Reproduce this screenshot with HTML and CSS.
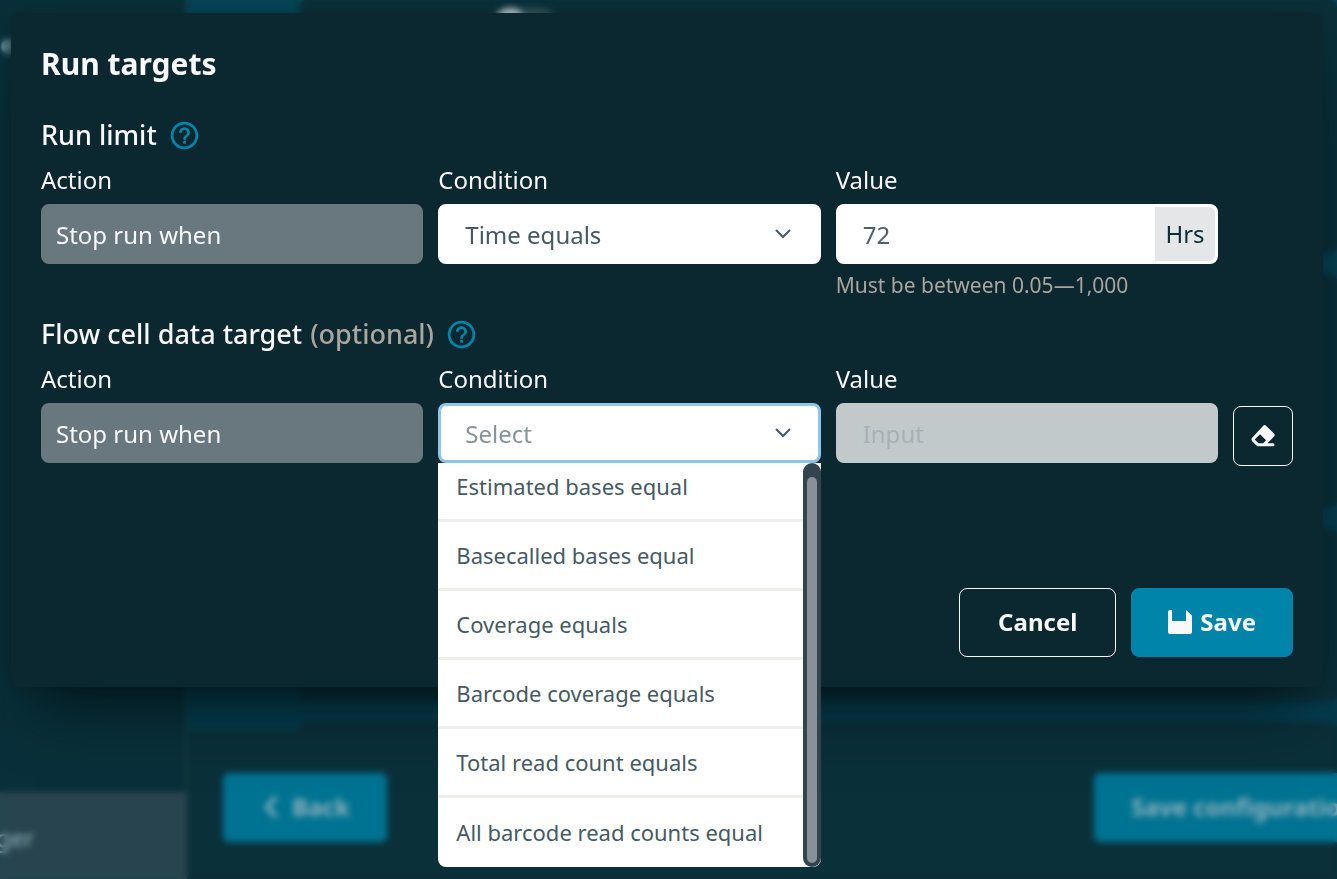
FILE: index.html
```html
<!DOCTYPE html>
<html lang="en">
<head>
    <meta charset="UTF-8">
    <meta name="viewport" content="width=device-width, initial-scale=1.0">
    <title>Run targets</title>
    <link rel="stylesheet" href="styles.css">
</head>
<body>
    <div class="app" inert>
        <div class="sidebar">
            <span class="sidebar-title">ile</span>
            <div class="sidebar-item">ger</div>
        </div>
        <div class="main">
            <div class="panels">
                <div class="panel panel-first"><span class="toggle"></span></div>
                <div class="panel"></div>
                <div class="panel"></div>
                <div class="panel panel-last"></div>
            </div>
            <div class="app-footer">
                <button class="app-button">
                    <svg width="20" height="24" viewBox="0 0 20 24" fill="none" stroke="currentColor" stroke-width="4"><path d="M16 2 7 12l9 10"/></svg>
                    Back
                </button>
                <button class="app-button">Save configuration</button>
            </div>
        </div>
    </div>

    <div class="overlay">
        <form class="modal" role="dialog" aria-labelledby="modalTitle">
            <h1 id="modalTitle">Run targets</h1>

            <h2>Run limit
                <svg class="help" viewBox="0 0 24 24"><path d="M11 18h2v-2h-2v2zm1-16C6.480 2 2 6.480 2 12s4.480 10 10 10 10-4.480 10-10S17.520 2 12 2zm0 18c-4.410 0-8-3.590-8-8s3.590-8 8-8 8 3.590 8 8-3.590 8-8 8zm0-14c-2.210 0-4 1.790-4 4h2c0-1.100.9-2 2-2s2 .9 2 2c0 2-3 1.750-3 5h2c0-2.250 3-2.500 3-5 0-2.210-1.790-4-4-4z"/></svg>
            </h2>
            <div class="row">
                <div class="field">
                    <label for="limitAction">Action</label>
                    <input class="box action" id="limitAction" type="text" value="Stop run when" readonly>
                </div>
                <div class="field">
                    <label for="limitCondition">Condition</label>
                    <div class="select-wrap">
                        <select class="box" id="limitCondition">
                            <option>Time equals</option>
                        </select>
                        <svg class="chevron" viewBox="0 0 16 10"><path d="M1 1l7 7 7-7"/></svg>
                    </div>
                </div>
                <div class="field">
                    <label for="limitValue">Value</label>
                    <div class="box value-box">
                        <input id="limitValue" type="text" value="72">
                        <span class="unit">Hrs</span>
                    </div>
                    <p class="hint">Must be between 0.05—1,000</p>
                </div>
            </div>

            <h2>Flow cell data target <span class="optional">(optional)</span>
                <svg class="help" viewBox="0 0 24 24"><path d="M11 18h2v-2h-2v2zm1-16C6.480 2 2 6.480 2 12s4.480 10 10 10 10-4.480 10-10S17.520 2 12 2zm0 18c-4.410 0-8-3.590-8-8s3.590-8 8-8 8 3.590 8 8-3.590 8-8 8zm0-14c-2.210 0-4 1.790-4 4h2c0-1.100.9-2 2-2s2 .9 2 2c0 2-3 1.750-3 5h2c0-2.250 3-2.500 3-5 0-2.210-1.790-4-4-4z"/></svg>
            </h2>
            <div class="row">
                <div class="field">
                    <label for="targetAction">Action</label>
                    <input class="box action" id="targetAction" type="text" value="Stop run when" readonly>
                </div>
                <div class="field">
                    <label for="targetCondition">Condition</label>
                    <div class="select-wrap">
                        <select class="box open" id="targetCondition">
                            <option>Select</option>
                        </select>
                        <svg class="chevron" viewBox="0 0 16 10"><path d="M1 1l7 7 7-7"/></svg>
                        <div class="dropdown">
                            <ul class="options" role="listbox" aria-label="Condition">
                                <li role="option">Estimated bases equal</li>
                                <li role="option">Basecalled bases equal</li>
                                <li role="option">Coverage equals</li>
                                <li role="option">Barcode coverage equals</li>
                                <li role="option">Total read count equals</li>
                                <li role="option">All barcode read counts equal</li>
                            </ul>
                            <div class="scrollbar"><div class="thumb"></div></div>
                        </div>
                    </div>
                </div>
                <div class="field">
                    <label for="targetValue">Value</label>
                    <input class="box" id="targetValue" type="text" placeholder="Input" disabled>
                </div>
                <button class="clear" type="button" aria-label="Clear">
                    <svg width="24" height="22" viewBox="0 0 24 22"><path fill="currentColor" fill-rule="evenodd" d="M12.200.7a2 2 0 0 1 2.800 0l8 7.800a2 2 0 0 1 0 2.900L16.500 18.300H22a1.500 1.500 0 0 1 0 3H7.500a3 3 0 0 1-2.100-.9L1.200 16.200a2.600 2.600 0 0 1 0-3.400zM9 9.200l-5.300 5.300 3.800 3.800h4.600l3-3z"/></svg>
                </button>
            </div>

            <div class="actions">
                <button class="cancel" type="button">Cancel</button>
                <button class="save" type="submit">
                    <svg width="24" height="24" viewBox="0 0 24 24"><path fill="currentColor" d="M2 0h2v11h14V0l6 5.500V22a2 2 0 0 1-2 2H2a2 2 0 0 1-2-2V2a2 2 0 0 1 2-2z"/></svg>
                    Save
                </button>
            </div>
        </form>
    </div>
</body>
</html>
```

FILE: styles.css
```css
* {box-sizing: border-box;}
body {margin: 0; font-family: 'Noto Sans', sans-serif; font-size: 24px; background-color: #0a303a; color: #f9f9fb;}
button, input, select {font-family: inherit; font-size: 24px; margin: 0;}
h1, h2, p, ul {margin: 0; padding: 0;}

/* app behind the dialog */
.app {display: flex; height: 100vh; overflow: hidden; color: #8db0bb;}
.sidebar {width: 187px; display: flex; flex-direction: column; justify-content: space-between; flex-shrink: 0; border-right: 2px solid #173c45; background-color: #09303a;}
.sidebar-title {height: 84px; line-height: 88px; margin-left: -13px; font-weight: 600;}
.sidebar-item {height: 87px; line-height: 92px; background-color: #27444f; margin-right: -2px; text-indent: -4px;}
.main {flex: 1; min-width: 0; display: flex; flex-direction: column;}
.panels {height: 731px; padding-left: 112px; display: flex; flex-direction: column; gap: 20px; background: linear-gradient(#054556, #053c4d); overflow: hidden;}
.panel {flex: 1; background-color: #0a303a; border-radius: 8px;}
.panel-first {flex: 0 0 254px; padding-left: 196px;}
.panel:nth-child(2) {flex: 0 0 234px;}
.panel:nth-child(3) {flex: 0 0 174px;}
.panel-last {flex: 0 0 40px;}
.toggle {display: block; width: 60px; height: 28px; margin-top: 8px; border-radius: 14px; background: radial-gradient(circle at 15px 14px, #b5c4c8 14px, #33535c 15px);}
.app-footer {flex: 1; display: flex; justify-content: space-between; align-items: flex-start; padding: 42px 0 0 36px; margin-right: -56px;}
.app-button {display: flex; align-items: center; justify-content: center; gap: 12px; height: 69px; padding: 0 37px 2px; border: none; border-radius: 6px; background-color: #007392; color: #8db0bb; font-weight: 700; white-space: nowrap;}

.overlay {position: fixed; inset: 0; padding: 13px 14px 0 11px; backdrop-filter: blur(3px);}
.modal {padding: 30px; background-color: #0b272f; border-radius: 8px; box-shadow: 0 40px 60px -24px rgba(0, 12, 18, .8), 0 0 20px rgba(0, 12, 18, .2);}

h1 {font-size: 30px; line-height: 42px; margin-bottom: 30px;}
h2 {display: flex; align-items: center; gap: 8px; font-size: 27px; line-height: 40px; font-weight: 500; margin-bottom: 6px;}
.optional {color: #aba59f;}
.help {width: 33px; height: 33px; margin-left: 3px; fill: #0084a9;}

.row {display: grid; grid-template-columns: 1fr 1fr 1fr 60px; gap: 15px; margin-bottom: 14px;}
.field {min-width: 0;}
.field label {display: block; line-height: 38px; margin-bottom: 5px;}
.box {display: block; width: 100%; height: 60px; padding: 0 24px; border: 3px solid #fff; border-radius: 8px; background-color: #fff; color: #455a64; outline: none;}
.box.action {padding: 0 12px; border-color: #69777e; background-color: #69777e; color: #f9f9fb;}
.box:disabled {border-color: #c2c9cb; background-color: #c2c9cb;}
.box::placeholder {color: #a7b0b4; opacity: 1;}
.select-wrap {position: relative;}
select.box {appearance: none;}
select.box.open {border-color: #8dc6e8; color: #87949b;}
.chevron {position: absolute; right: 30px; top: 25px; width: 16px; height: 10px; fill: none; stroke: #455a64; stroke-width: 2; pointer-events: none;}

.value-box {display: flex; padding: 0;}
.value-box input {flex: 1; min-width: 0; padding: 0 24px; border: none; background: none; color: #4f6168; outline: none;}
.unit {width: 60px; line-height: 54px; text-align: center; border-radius: 0 6px 6px 0; background-color: #e4e6e8; color: #0b303a;}
.hint {margin-top: 6px; font-size: 21px; line-height: 30px; color: #aba59f;}

.dropdown {position: absolute; z-index: 2; top: 100%; left: 0; width: 100%; display: flex; background-color: #fff; border-radius: 0 0 8px 8px;}
.options {flex: 1; list-style-type: none; font-size: 22px; color: #455a64;}
.options li {height: 69px; padding-left: 18px; line-height: 66px; border-bottom: 3px solid #efeeed; white-space: nowrap;}
.options li:first-child {height: 59px; line-height: 46px;}
.options li:last-child {border-bottom: none; line-height: 69px;}
.scrollbar {width: 18px; padding: 14px 4px 4px; border-radius: 9px; background-color: #33444f;}
.thumb {height: 100%; border-radius: 5px; background-color: #869298;}

.clear {align-self: end; display: flex; align-items: center; justify-content: center; height: 60px; margin-bottom: -3px; padding: 0; border: 1px solid #f9f9fb; border-radius: 8px; background: none; color: #f9f9fb;}
.actions {display: flex; justify-content: flex-end; gap: 15px; margin-top: 125px;}
.actions button {display: flex; align-items: center; justify-content: center; gap: 8px; height: 69px; padding: 0 36px 2px; border: 1px solid #f9f9fb; border-radius: 8px; background: none; color: #f9f9fb; font-weight: 700;}
.actions .cancel {padding: 0 38px 2px;}
.actions .save {border-color: #0084a9; background-color: #0084a9;}
```
